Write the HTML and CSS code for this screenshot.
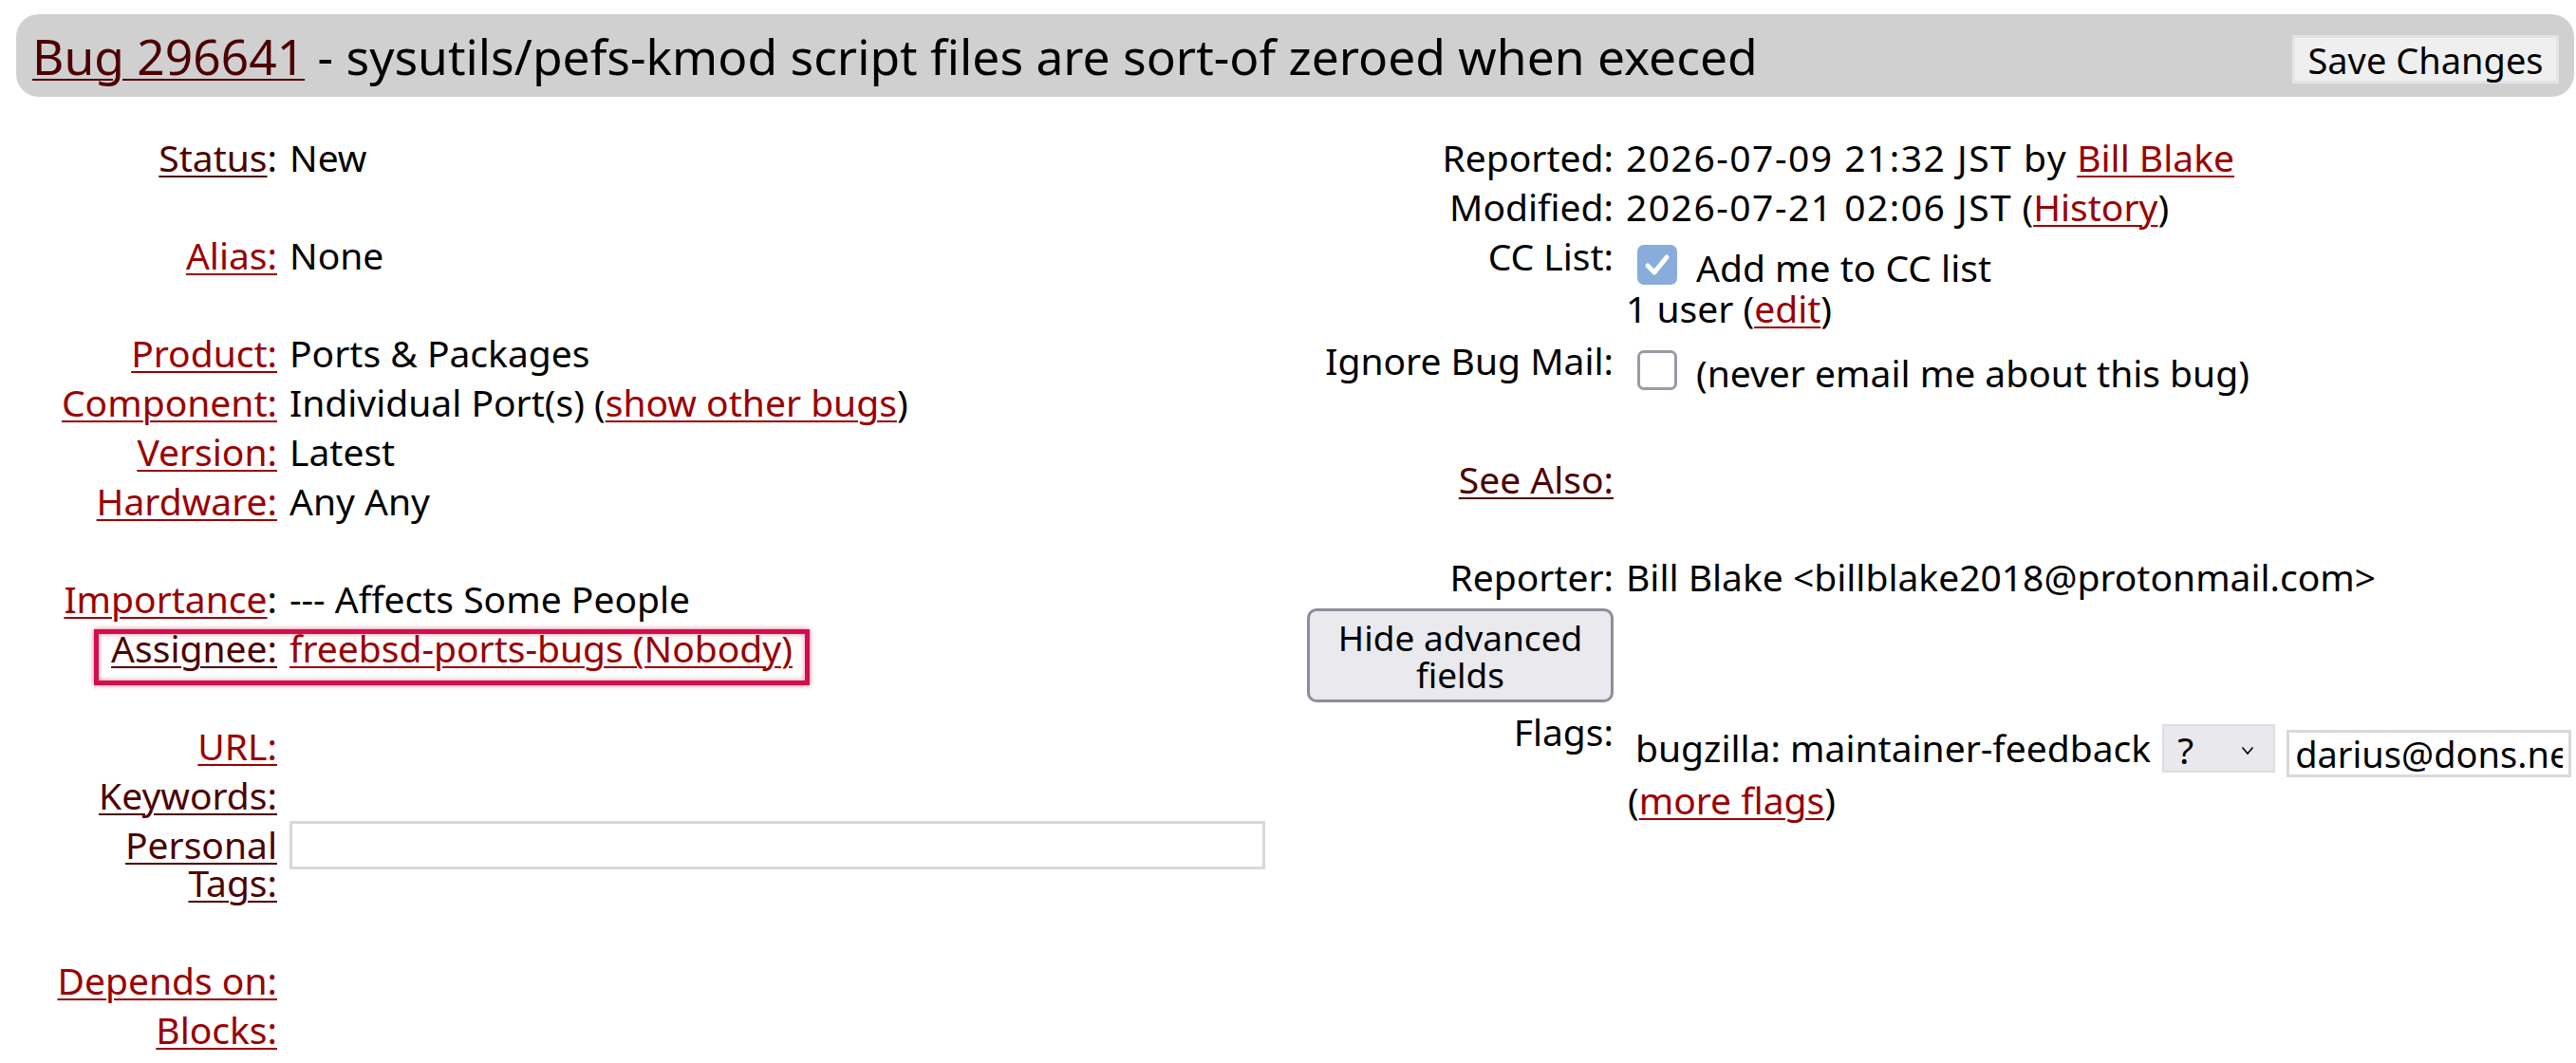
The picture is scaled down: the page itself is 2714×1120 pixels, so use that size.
FILE: index.html
```html
<!DOCTYPE html>
<html lang="en">
<head>
<meta charset="utf-8">
<title>Bug 296641</title>
<link rel="stylesheet" href="styles.css">
</head>
<body>
<div class="bug-header">
  <div class="summary"><a class="visited" href="#">Bug 296641</a> - sysutils/pefs-kmod script files are sort-of zeroed when execed</div>
  <button class="save-btn" type="button">Save Changes</button>
</div>
<div class="bug-body">
  <div class="col-left">
    <div class="fields fields-left">
      <div class="lbl"><a class="visited" href="#">Status</a>:</div><div class="val">New</div>
      <div class="spacer"></div>
      <div class="lbl"><a href="#">Alias:</a></div><div class="val">None</div>
      <div class="spacer"></div>
      <div class="lbl"><a href="#">Product:</a></div><div class="val">Ports &amp; Packages</div>
      <div class="lbl"><a href="#">Component:</a></div><div class="val">Individual Port(s) (<a href="#">show other bugs</a>)</div>
      <div class="lbl"><a href="#">Version:</a></div><div class="val">Latest</div>
      <div class="lbl"><a href="#">Hardware:</a></div><div class="val">Any Any</div>
      <div class="spacer"></div>
      <div class="lbl"><a href="#">Importance</a>:</div><div class="val">--- Affects Some People</div>
      <div class="lbl"><a class="visited" href="#">Assignee:</a></div><div class="val"><a href="#">freebsd-ports-bugs (Nobody)</a></div>
      <div class="spacer"></div>
      <div class="lbl"><a href="#">URL:</a></div><div class="val"></div>
      <div class="lbl"><a class="visited" href="#">Keywords:</a></div><div class="val"></div>
      <div class="lbl lbl-two"><a class="visited" href="#">Personal</a><br><a class="visited" href="#">Tags:</a></div><div class="val val-input"><input class="tags-input" type="text"></div>
      <div class="spacer"></div>
      <div class="lbl"><a href="#">Depends on:</a></div><div class="val"></div>
      <div class="lbl"><a href="#">Blocks:</a></div><div class="val"></div>
    </div>
    <div class="highlight"></div>
  </div>
  <div class="col-right">
    <div class="fields fields-right">
      <div class="lbl">Reported:</div><div class="val"><span class="date">2026-07-09 21:32 JST by</span> <a href="#">Bill Blake</a></div>
      <div class="lbl">Modified:</div><div class="val"><span class="date">2026-07-21 02:06 JST</span> (<a href="#">History</a>)</div>
      <div class="lbl">CC List:</div>
      <div class="val val-cc">
        <div class="check-line"><span class="checkbox checked"><svg viewBox="0 0 42 42" width="42" height="42"><path d="M11 22 L18 29 L31 13" fill="none" stroke="#fff" stroke-width="5" stroke-linecap="round" stroke-linejoin="round"/></svg></span><span class="check-text">Add me to CC list</span></div>
        <div class="cc-users">1 user (<a href="#">edit</a>)</div>
      </div>
      <div class="lbl lbl-ignore">Ignore Bug Mail:</div>
      <div class="val val-ignore">
        <div class="check-line"><span class="checkbox"></span><span class="check-text">(never email me about this bug)</span></div>
      </div>
      <div class="spacer"></div>
      <div class="lbl"><a class="visited" href="#">See Also:</a></div><div class="val"></div>
      <div class="spacer"></div>
      <div class="lbl">Reporter:</div><div class="val">Bill Blake &lt;billblake2018@protonmail.com&gt;</div>
      <div class="lbl lbl-btn"><button class="adv-btn" type="button">Hide advanced fields</button></div><div class="val"></div>
      <div class="lbl">Flags:</div>
      <div class="val val-flags">
        <div class="flag-line">
          <span class="flag-name">bugzilla: maintainer-feedback</span>
          <span class="flag-select"><span class="q">?</span><svg class="chev" viewBox="0 0 14 10" width="14" height="10"><path d="M1.5 1.5 L7 8 L12.5 1.5" fill="none" stroke="#000" stroke-width="1.6"/></svg></span>
          <input class="flag-input" type="text" value="darius@dons.net">
        </div>
        <div class="more-flags">(<a href="#">more flags</a>)</div>
      </div>
    </div>
  </div>
</div>
</body>
</html>
```

FILE: styles.css
```css
html, body {
  margin: 0;
  padding: 0;
  background: #fff;
}
body {
  font-family: "Noto Sans", "Open Sans", sans-serif;
  font-size: 39px;
  color: #000;
  overflow: hidden;
}
a {
  color: #9a0000;
  text-decoration: underline;
  text-decoration-thickness: 2px;
  text-underline-offset: 4px;
}
a.visited {
  color: #4d0000;
}
.date {
  letter-spacing: 1.5px;
}

.bug-header {
  margin: 15px 2px 0 17px;
  height: 87px;
  background: #d0d0d0;
  border-radius: 24px;
  display: flex;
  align-items: center;
  justify-content: space-between;
  padding: 0 16px 0 17px;
  box-sizing: border-box;
}
.summary {
  font-size: 51.5px;
  white-space: nowrap;
}
.save-btn {
  font-family: inherit;
  font-size: 38px;
  height: 51px;
  width: 281px;
  margin-top: 8px;
  padding: 0;
  background: #efefef;
  border: 3px solid #e4e4e4;
  border-radius: 0;
  color: #000;
  line-height: 1;
}

.bug-body {
  display: flex;
  align-items: flex-start;
  margin-top: 38px;
}
.col-left {
  position: relative;
  flex: none;
}
.col-right {
  margin-left: 45px;
  flex: 1;
}

.fields {
  display: grid;
  column-gap: 13px;
  align-items: start;
}
.fields-left {
  grid-template-columns: 292px 1028px;
}
.fields-right {
  grid-template-columns: 322px 1fr;
}
.lbl {
  text-align: right;
  padding: 6px 0;
  line-height: 40px;
  white-space: nowrap;
}
.lbl-ignore {
  padding-top: 9px;
}
.val {
  padding: 6px 0;
  line-height: 40px;
  white-space: nowrap;
}
.spacer {
  grid-column: 1 / -1;
  height: 51px;
}
.val-input {
  padding: 1px 0 0;
}
.tags-input {
  display: block;
  box-sizing: border-box;
  width: 1028px;
  height: 51px;
  border: 3px solid #d9d9d9;
  border-radius: 0;
  background: #fff;
  margin: 0;
  padding: 0 8px;
  font-family: inherit;
  font-size: 38px;
}

.highlight {
  position: absolute;
  left: 99px;
  top: 523px;
  width: 754px;
  height: 59px;
  box-sizing: border-box;
  border: 5px solid #d0104c;
  box-shadow: 0 0 5px rgba(208, 16, 76, 0.6), inset 0 0 5px rgba(208, 16, 76, 0.5);
  pointer-events: none;
}

/* checkboxes */
.val-cc {
  padding: 14px 0 6px;
}
.val-ignore {
  padding: 18px 0 17px;
}
.check-line {
  display: flex;
  align-items: flex-end;
  height: 42px;
}
.checkbox {
  flex: none;
  align-self: flex-start;
  width: 42px;
  height: 42px;
  box-sizing: border-box;
  border-radius: 7px;
  margin-left: 12px;
  margin-right: 20px;
  background: #fff;
  border: 3px solid #9b99a6;
}
.checkbox.checked {
  background: #88acdb;
  border: none;
}
.checkbox svg {
  display: block;
}
.check-text {
  line-height: 36px;
}
.cc-users {
  margin-top: 5px;
  line-height: 40px;
}

/* advanced button */
.lbl-btn {
  padding: 7px 0 5px;
}
.adv-btn {
  display: block;
  width: 323px;
  height: 99px;
  margin-left: -1px;
  box-sizing: border-box;
  background: #e9e9ee;
  border: 3px solid #8f8d9b;
  border-radius: 10px;
  font-family: inherit;
  font-size: 37px;
  line-height: 39px;
  white-space: normal;
  color: #000;
  padding: 6px 8px 6px;
  text-align: center;
}

/* flags */
.val-flags {
  padding: 0;
}
.flag-line {
  display: flex;
  align-items: flex-start;
}
.flag-name {
  margin-top: 23px;
  margin-left: 10px;
  line-height: 40px;
}
.flag-select {
  margin-top: 18px;
  margin-left: 12px;
  width: 119px;
  height: 51px;
  flex: none;
  box-sizing: border-box;
  background: #e9e9ed;
  border: 2px solid #dedee2;
  display: flex;
  align-items: center;
  justify-content: space-between;
  padding: 0 20px 0 14px;
}
.flag-select .q {
  line-height: 40px;
  margin-top: 2px;
}
.flag-select .chev {
  display: block;
  margin-top: 4px;
}
.flag-input {
  flex: none;
  margin-top: 24px;
  margin-left: 12px;
  width: 300px;
  height: 50px;
  box-sizing: border-box;
  border: 3px solid #d9d9d9;
  border-radius: 0;
  padding: 0 6px;
  font-family: inherit;
  font-size: 38px;
  color: #000;
  background: #fff;
}
.more-flags {
  margin-top: 4px;
  line-height: 40px;
  margin-left: 2px;
}
```
